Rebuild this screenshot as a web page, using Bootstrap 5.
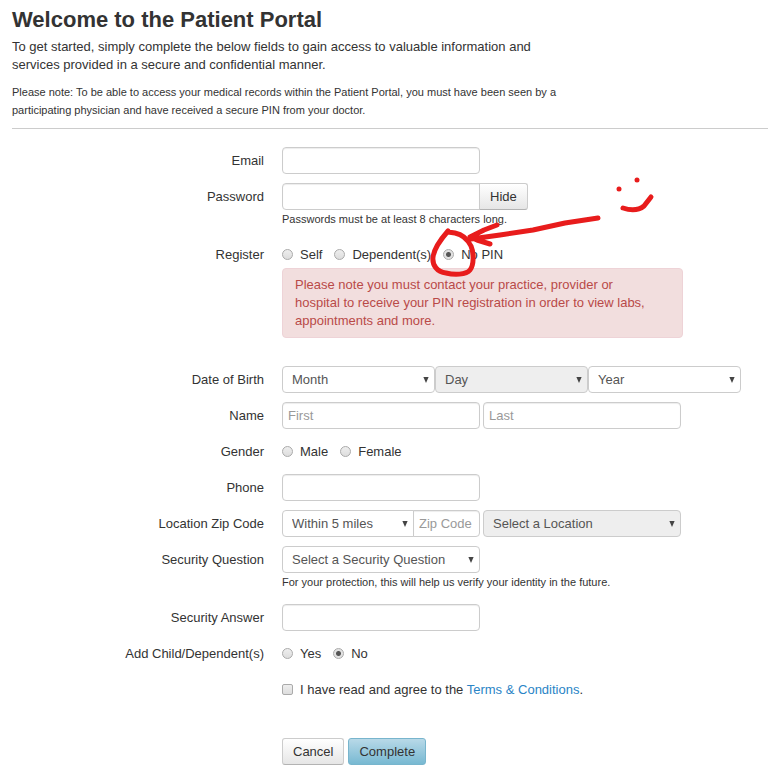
<!DOCTYPE html>
<html lang="en">
<head>
<meta charset="utf-8">
<meta name="viewport" content="width=device-width, initial-scale=1">
<title>Patient Portal</title>
<link href="https://cdn.jsdelivr.net/npm/bootstrap@5.3.0/dist/css/bootstrap.min.css" rel="stylesheet">
<style>
body { font-family: "Liberation Sans", Arial, sans-serif; font-size: 13px; line-height: 18px; color: #333; }
.portal { padding: 8px 10px 12px 12px; }
.portal h1 { font-size: 22px; line-height: 24px; font-weight: 700; margin-bottom: 6px; }
.intro { max-width: 550px; margin-bottom: 9px; }
.fine { max-width: 560px; font-size: 11px; }
.rule { border-top: 1px solid #ccc; opacity: 1; margin: 9px 0 18px; }
.line { display: flex; gap: 18px; margin-bottom: 9px; }
.line-name { flex: 0 0 252px; text-align: right; padding-top: 5px; }
.line-body { flex: 1 1 0; min-width: 0; }
.form-control, .form-select {
  height: 27px; font-size: 13px; line-height: 18px; color: #555; border: 1px solid #ccc; border-radius: 4px;
  padding: 3px 5px; box-shadow: inset 0 1px 1px rgba(0,0,0,.075); min-width: 0;
}
.form-control::placeholder { color: #999; }
.form-select {
  padding: 3px 16px 3px 9px; box-shadow: none;
  background-image: url("data:image/svg+xml,%3Csvg xmlns='http://www.w3.org/2000/svg' viewBox='0 0 6 6'%3E%3Cpath d='M.4 0h5.2L3 6z' fill='%23444'/%3E%3C/svg%3E");
  background-size: 6px 6px; background-position: right 5px center;
}
.form-select:disabled { background-color: #eee; color: #555; opacity: 1; }
.w-std { flex: 0 1 198px; max-width: 198px; }
.w-date { flex: 0 1 153px; }
.w-miles { flex: 0 1 132px; }
.w-zip { flex: 0 1 67px; }
.gap-s { gap: 3px; }
.join-l { border-top-right-radius: 0; border-bottom-right-radius: 0; }
.btn.join-r, .join-r { border-top-left-radius: 0; border-bottom-left-radius: 0; margin-left: -1px; }
.hint { font-size: 11px; margin-bottom: 4px; }
.choices { display: flex; gap: 12px; min-height: 27px; align-items: center; }
.choice { display: flex; align-items: center; gap: 7px; }
.choice input {
  appearance: none; flex: none; width: 11px; height: 11px; margin: 0; border: 1px solid #aaa; border-radius: 2px;
  background: linear-gradient(#eee, #ddd);
}
.choice input[type=radio] { border-radius: 50%; }
.choice input[type=radio]:checked { background: radial-gradient(circle, #555 2px, #e2e2e2 3px); }
.choice a { color: #2a84c6; text-decoration: none; }
.notice {
  max-width: 401px; margin: 0 0 28px; padding: 7px 32px 7px 12px; color: #b94a48; background: #f2dede;
  border: 1px solid #eed3d7; border-radius: 4px;
}
.btn { font-size: 13px; line-height: 18px; height: 27px; padding: 3px 10px; border-radius: 3px; color: #333; }
.btn-plain { background: linear-gradient(#fff, #e6e6e6); border: 1px solid #ccc; border-bottom-color: #b3b3b3; }
.btn-done { background: linear-gradient(#b8d9e8, #78b9d2); border: 1px solid #78b5cd; }
.actions { margin-top: 35px; gap: 4px; }
.scribble { position: absolute; left: 138px; top: -81px; pointer-events: none; z-index: 2; }
</style>
</head>
<body>
<main class="portal">
  <h1>Welcome to the Patient Portal</h1>
  <p class="intro">To get started, simply complete the below fields to gain access to valuable information and services provided in a secure and confidential manner.</p>
  <p class="intro fine">Please note: To be able to access your medical records within the Patient Portal, you must have been seen by a participating physician and have received a secure PIN from your doctor.</p>
  <hr class="rule">
  <form>
    <div class="line">
      <label class="line-name" for="email">Email</label>
      <div class="line-body d-flex"><input class="form-control w-std" type="email" id="email"></div>
    </div>
    <div class="line">
      <label class="line-name" for="password">Password</label>
      <div class="line-body">
        <div class="d-flex">
          <input class="form-control w-std join-l" type="password" id="password" aria-describedby="pw-hint">
          <button class="btn btn-plain join-r" type="button">Hide</button>
        </div>
        <div class="hint" id="pw-hint">Passwords must be at least 8 characters long.</div>
      </div>
    </div>
    <div class="line mb-0" role="radiogroup" aria-labelledby="reg">
      <div class="line-name" id="reg">Register</div>
      <div class="line-body">
        <div class="choices position-relative">
          <label class="choice"><input type="radio" name="register">Self</label>
          <label class="choice"><input type="radio" name="register">Dependent(s)</label>
          <label class="choice"><input type="radio" name="register" checked>No PIN</label>
          <svg class="scribble" width="250" height="120" viewBox="420 160 250 120" fill="none" stroke="#e81c1c" stroke-width="5" stroke-linecap="round" stroke-linejoin="round" aria-hidden="true">
            <path d="M448 231C441 239 434 249 433 257C432 265 437 272 446 273C454 275 466 275 470 270C474 265 474 253 471 246C467 238 460 234 455 233L448 232"/>
            <path d="M598 218L565 223L533 230L500 235L471 239M497 225L484 230L470 237M470 237L477 240L490 244"/>
            <path d="M623 208C632 211 639 210 644 206L651 197"/>
            <g fill="#e81c1c" stroke="none"><circle cx="619" cy="189" r="2.5"/><circle cx="637" cy="180" r="2.5"/></g>
          </svg>
        </div>
        <div class="notice">Please note you must contact your practice, provider or hospital to receive your PIN registration in order to view labs, appointments and more.</div>
      </div>
    </div>
    <div class="line">
      <label class="line-name" for="month">Date of Birth</label>
      <div class="line-body d-flex">
        <select class="form-select w-date" id="month"><option>Month</option></select>
        <select class="form-select w-date" aria-label="Day" disabled><option>Day</option></select>
        <select class="form-select w-date" aria-label="Year"><option>Year</option></select>
      </div>
    </div>
    <div class="line">
      <label class="line-name" for="first">Name</label>
      <div class="line-body d-flex gap-s">
        <input class="form-control w-std" id="first" placeholder="First">
        <input class="form-control w-std" aria-label="Last name" placeholder="Last">
      </div>
    </div>
    <div class="line" role="radiogroup" aria-labelledby="gen">
      <div class="line-name" id="gen">Gender</div>
      <div class="line-body choices">
        <label class="choice"><input type="radio" name="gender">Male</label>
        <label class="choice"><input type="radio" name="gender">Female</label>
      </div>
    </div>
    <div class="line">
      <label class="line-name" for="phone">Phone</label>
      <div class="line-body d-flex"><input class="form-control w-std" type="tel" id="phone"></div>
    </div>
    <div class="line">
      <label class="line-name" for="zip">Location Zip Code</label>
      <div class="line-body d-flex gap-s">
        <div class="d-flex w-std">
          <select class="form-select w-miles join-l" aria-label="Distance"><option>Within 5 miles</option></select>
          <input class="form-control w-zip join-r" id="zip" placeholder="Zip Code">
        </div>
        <select class="form-select w-std" aria-label="Location" disabled><option>Select a Location</option></select>
      </div>
    </div>
    <div class="line">
      <label class="line-name" for="question">Security Question</label>
      <div class="line-body">
        <div class="d-flex"><select class="form-select w-std" id="question"><option>Select a Security Question</option></select></div>
        <div class="hint">For your protection, this will help us verify your identity in the future.</div>
      </div>
    </div>
    <div class="line">
      <label class="line-name" for="answer">Security Answer</label>
      <div class="line-body d-flex"><input class="form-control w-std" id="answer"></div>
    </div>
    <div class="line" role="radiogroup" aria-labelledby="dep">
      <div class="line-name" id="dep">Add Child/Dependent(s)</div>
      <div class="line-body choices">
        <label class="choice"><input type="radio" name="child">Yes</label>
        <label class="choice"><input type="radio" name="child" checked>No</label>
      </div>
    </div>
    <div class="line mb-0">
      <div class="line-name"></div>
      <div class="line-body choices">
        <label class="choice"><input type="checkbox"><span>I have read and agree to the <a href="#">Terms &amp; Conditions</a>.</span></label>
      </div>
    </div>
    <div class="line mb-0">
      <div class="line-name"></div>
      <div class="line-body d-flex actions">
        <button class="btn btn-plain" type="button">Cancel</button>
        <button class="btn btn-done" type="submit">Complete</button>
      </div>
    </div>
  </form>
</main>
<script src="https://cdn.jsdelivr.net/npm/bootstrap@5.3.0/dist/js/bootstrap.bundle.min.js"></script>
</body>
</html>
